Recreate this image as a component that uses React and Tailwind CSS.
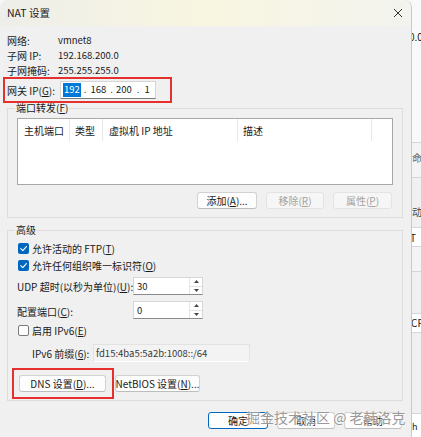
import React from 'react';

function Btn({ children, w, disabled, primary, className = '' }) {
  const tone = disabled
    ? 'bg-[#f6f6f6] border-[#e3e3e3] text-[#a3a3a3]'
    : primary
      ? 'bg-[#fdfdfd] border-[#0067c0] text-[#1a1a1a]'
      : 'bg-[#fdfdfd] border-[#d2d2d2] border-b-[#bdbdbd] text-[#1a1a1a]';
  return (
    <div className={`${w} h-[17px] shrink-0 whitespace-nowrap flex items-center justify-center border rounded-[3px] text-[10px] leading-none ${tone} ${className}`}>
      {children}
    </div>
  );
}

function Check({ checked }) {
  if (!checked) {
    return <div className="w-[11px] h-[11px] rounded-[2px] border border-[#7a7a7a] bg-white shrink-0" />;
  }
  return (
    <div className="w-[11px] h-[11px] rounded-[2px] bg-[#0067c0] shrink-0 flex items-center justify-center">
      <svg width="9" height="9" viewBox="0 0 10 10" fill="none">
        <polyline points="2,5.2 4.2,7.4 8.2,2.8" stroke="#fff" strokeWidth="1.3" strokeLinecap="round" strokeLinejoin="round" />
      </svg>
    </div>
  );
}

function Spin({ value }) {
  return (
    <div className="w-[70px] h-[18px] shrink-0 bg-white border border-[#d6d6d6] border-b-[#8a8a8a] flex">
      <div className="flex-1 pl-[3px] text-[9.5px] leading-[16px] text-[#1a1a1a]">{value}</div>
      <div className="w-[13px] flex flex-col border-l border-[#e4e4e4]">
        <div className="flex-1 flex items-center justify-center border-b border-[#e4e4e4]">
          <svg width="5" height="3" viewBox="0 0 5 3"><polygon points="2.5,0 5,3 0,3" fill="#444" /></svg>
        </div>
        <div className="flex-1 flex items-center justify-center">
          <svg width="5" height="3" viewBox="0 0 5 3"><polygon points="0,0 5,0 2.5,3" fill="#444" /></svg>
        </div>
      </div>
    </div>
  );
}

function Group({ label, className, children }) {
  return (
    <div className={`relative border border-[#dcdcdc] ml-[7px] mr-[8px] ${className}`}>
      <span className="absolute left-[7px] -top-[8px] bg-[#f0f0f0] px-[1px] text-[10px] leading-[14px] whitespace-nowrap text-[#1a1a1a]">
        {label}
      </span>
      {children}
    </div>
  );
}

const info = [
  ['网络:', 'vmnet8'],
  ['子网 IP:', '192.168.200.0'],
  ['子网掩码:', '255.255.255.0'],
];

const cols = [
  ['主机端口', 'w-[52px] pl-[6px]'],
  ['类型', 'w-[33px] pl-[5px]'],
  ['虚拟机 IP 地址', 'w-[135px] pl-[6px]'],
  ['描述', 'w-[134px] pl-[5px]'],
];

export default function App() {
  return (
    <div className="relative w-[421px] h-[437px] overflow-hidden flex bg-[#f7f7f7] font-['Noto_Sans_CJK_SC','Noto_Sans',sans-serif] text-[#1a1a1a]">
      {/* dialog */}
      <div className="w-[412px] h-[437px] shrink-0 bg-[#f0f0f0] border-r border-[#c9c9c9] rounded-t-[8px] flex flex-col overflow-hidden">
        {/* title bar */}
        <div className="h-[26px] shrink-0 flex items-center justify-between pl-[7px] pr-[8px] bg-gradient-to-r from-[#eeeeea] via-[#f8f6e0] to-[#f3f3ef]">
          <span className="text-[10.5px] leading-none">NAT 设置</span>
          <svg width="10" height="10" viewBox="0 0 10 10">
            <path d="M1 1L9 9M9 1L1 9" stroke="#333" strokeWidth="1" />
          </svg>
        </div>

        {/* info rows */}
        <div className="pl-[7px] pt-[7px]">
          {info.map(([k, v]) => (
            <div key={k} className="flex items-center h-[15px] whitespace-nowrap">
              <span className="w-[51px] text-[10px]">{k}</span>
              <span className="text-[9.5px]">{v}</span>
            </div>
          ))}
        </div>

        {/* gateway, marked in red */}
        <div className="relative z-10 -mt-px ml-[3px] w-[169px] h-[26px] shrink-0 border-2 border-[#e5312e] flex items-center pl-[2px] whitespace-nowrap">
          <span className="w-[53px] shrink-0 text-[10px]">网关 IP(<u>G</u>):</span>
          <div className="w-[96px] h-[18px] shrink-0 bg-white border border-[#d6d6d6] border-b-[#7a7a7a] flex items-center pl-[2px] text-[9.5px] leading-none">
            <span className="bg-[#0078d7] text-white px-[1px] py-[2px]">192</span>
            <span className="ml-[3px]">.</span>
            <span className="ml-[4px]">168</span>
            <span className="ml-[4px]">.</span>
            <span className="ml-[3px]">200</span>
            <span className="ml-[5px]">.</span>
            <span className="ml-[5px]">1</span>
          </div>
        </div>

        {/* port forwarding */}
        <Group label={<>端口转发(<u>F</u>)</>} className="mt-[5px] h-[110px] shrink-0">
          <div className="pt-[9px] pl-[9px]">
            <div className="w-[376px] h-[67px] bg-white border border-[#a8a8a8]">
              <div className="flex h-[22px]">
                {cols.map(([t, c]) => (
                  <div key={t} className={`${c} h-full flex items-center border-r border-[#e8e8e8] text-[10px] whitespace-nowrap`}>
                    {t}
                  </div>
                ))}
              </div>
            </div>
            <div className="mt-[7px] flex justify-end gap-[9px] pr-[10px]">
              <Btn w="w-[60px]">添加(<u>A</u>)...</Btn>
              <Btn w="w-[58px]" disabled>移除(<u>R</u>)</Btn>
              <Btn w="w-[59px]" disabled>属性(<u>P</u>)</Btn>
            </div>
          </div>
        </Group>

        {/* advanced */}
        <Group label="高级" className="mt-[12px] h-[171px] shrink-0">
          <div className="pt-[10px] flex flex-col whitespace-nowrap">
            <div className="h-[14px] flex items-center gap-[3px] pl-[10px] text-[10px]">
              <Check checked />
              <span>允许活动的 FTP(<u>T</u>)</span>
            </div>
            <div className="mt-[3px] h-[14px] flex items-center gap-[3px] pl-[10px] text-[10px]">
              <Check checked />
              <span>允许任何组织唯一标识符(<u>O</u>)</span>
            </div>
            <div className="mt-[5px] h-[18px] flex items-center pl-[9px]">
              <span className="w-[116px] shrink-0 text-[10px]">UDP 超时(以秒为单位)(<u>U</u>):</span>
              <Spin value="30" />
            </div>
            <div className="mt-[6px] h-[18px] flex items-center pl-[9px]">
              <span className="w-[116px] shrink-0 text-[10px] pt-[3px]">配置端口(<u>C</u>):</span>
              <Spin value="0" />
            </div>
            <div className="mt-[4px] h-[14px] flex items-center gap-[3px] pl-[10px] text-[10px]">
              <Check />
              <span>启用 IPv6(<u>E</u>)</span>
            </div>
            <div className="mt-[7px] h-[18px] flex items-center pl-[24px]">
              <span className="w-[61px] shrink-0 text-[10px]">IPv6 前缀(<u>6</u>):</span>
              <div className="w-[157px] h-[18px] shrink-0 bg-[#f3f3f3] border border-[#e2e2e2] border-b-white pl-[2px] text-[9.5px] leading-[16px] text-[#3a3a3a]">
                fd15:4ba5:5a2b:1008::/64
              </div>
            </div>
            <div className="mt-[6px] flex items-start">
              <div className="ml-[4px] w-[102px] h-[31px] shrink-0 border-2 border-[#e5312e] pl-[5px] pt-[5px]">
                <Btn w="w-[87px]">DNS 设置(<u>D</u>)...</Btn>
              </div>
              <Btn w="w-[85px]" className="ml-[1px] mt-[7px]">NetBIOS 设置(<u>N</u>)...</Btn>
            </div>
          </div>
        </Group>

        {/* footer */}
        <div className="mt-[11px] flex justify-end gap-[9px] pr-[9px]">
          <Btn w="w-[60px]" primary>确定</Btn>
          <Btn w="w-[58px]">取消</Btn>
          <Btn w="w-[58px]">帮助</Btn>
        </div>
      </div>

      {/* window behind, right edge */}
      <div className="w-[9px] h-full overflow-hidden flex flex-col text-[10px] leading-[14px] whitespace-nowrap">
        <div className="h-[30px] bg-[#f9f9f9]" />
        <div className="h-[14px] bg-[#f9f9f9] -ml-[3px]">0.0</div>
        <div className="h-[98px] bg-[#f9f9f9]" />
        <div className="h-[36px] border-t border-b border-[#d6d6d6] bg-[#f4f4f4] pt-[8px] text-[#666]">命</div>
        <div className="h-[49px] bg-[#f0f0f0] pt-[27px] text-[#444]">动</div>
        <div className="h-[20px] border-t border-b border-[#d6d6d6] bg-white pt-[3px] -ml-[2px]">T</div>
        <div className="h-[25px] bg-[#f4f4f4] border-b border-[#d6d6d6]" />
        <div className="h-[41px] bg-[#f0f0f0]" />
        <div className="h-[20px] border-t border-b border-[#d6d6d6] bg-white pt-[2px] -ml-[1px]">CP</div>
        <div className="h-[80px] bg-[#f0f0f0]" />
        <div className="h-[24px] bg-white border-t border-[#d6d6d6] pt-[6px] text-[9px]">h</div>
      </div>

      {/* watermark */}
      <div className="absolute left-[246px] top-[407px] text-[14px] leading-[20px] whitespace-nowrap text-[#8c8c8c]/90 [text-shadow:0_0_2px_#ffffff,0_0_1px_#ffffff]">
        掘金技术社区 @ 老韩洛克
      </div>
    </div>
  );
}
